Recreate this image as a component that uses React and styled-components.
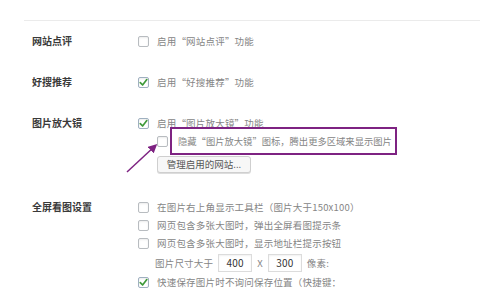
import React from "react";
import styled, { createGlobalStyle } from "styled-components";

const Global = createGlobalStyle`
  html, body { margin: 0; padding: 0; background: #fff; }
  body {
    font-family: "Noto Sans CJK SC", "Noto Sans", sans-serif;
    width: 480px; height: 295px; overflow: hidden;
  }
`;

const Page = styled.div`
  padding-top: 20px;
  position: relative;
`;

const Rule = styled.div`
  margin-left: 24px;
  border-top: 1px solid #ebebeb;
`;

const Form = styled.div`
  padding-left: 32px;
  padding-top: 11px;
`;

const Row = styled.div`
  display: grid;
  grid-template-columns: 106px 1fr;
  padding: ${(p) => p.$pad || "0 0 23px"};
  position: relative;
`;

const Label = styled.div`
  font-size: 10px;
  font-weight: 700;
  color: #3a3a3a;
  line-height: 18px;
  height: 18px;
`;

const Controls = styled.div`
  display: flex;
  flex-direction: column;
`;

const Item = styled.label`
  display: flex;
  align-items: center;
  gap: ${(p) => p.$gap || 8}px;
  height: ${(p) => p.$h || 18}px;
  padding-left: ${(p) => p.$indent || 0}px;
  font-size: 9.5px;
  letter-spacing: 0.2px;
  color: #858585;
  white-space: nowrap;
`;

const Box = styled.span`
  width: 11px;
  height: 11px;
  flex: none;
  box-sizing: border-box;
  border: 1px solid ${(p) => (p.$checked ? "#9fb0c0" : "#b8bcc0")};
  border-radius: 2px;
  background: #fff;
  box-shadow: inset 0 1px 2px rgba(0, 0, 0, 0.08);
  display: flex;
  align-items: center;
  justify-content: center;
`;

const Highlight = styled.span`
  position: relative;
  letter-spacing: 0;
  font-size: 9.3px;
  &::after {
    content: "";
    position: absolute;
    top: -7px;
    bottom: -7px;
    left: -8px;
    right: -5px;
    border: 2px solid #7e2382;
  }
`;

const Button = styled.button`
  margin: 6px 0 0 19px;
  align-self: flex-start;
  width: 94px;
  height: 17px;
  padding: 0;
  font-family: inherit;
  font-size: 9.5px;
  color: #555;
  background: #f7f7f7;
  border: 1px solid #cfcfcf;
  border-radius: 3px;
  box-shadow: 0 1px 0 #ddd;
  line-height: 15px;
`;

const Num = styled.span`
  width: 34px;
  height: 18px;
  box-sizing: border-box;
  border: 1px solid #dcdcdc;
  box-shadow: inset 0 1px 2px rgba(0, 0, 0, 0.06);
  display: inline-flex;
  align-items: center;
  justify-content: center;
  font-size: 10px;
  color: #333;
`;

const SizeRow = styled.div`
  display: flex;
  align-items: center;
  height: 21px;
  padding-left: 17px;
  font-size: 9.5px;
  letter-spacing: 0.2px;
  color: #858585;
  white-space: nowrap;
  gap: 5px;
`;

const Arrow = styled.svg`
  position: absolute;
  left: 0;
  top: 0;
  overflow: visible;
  pointer-events: none;
`;

const Check = () => (
  <svg width="9" height="9" viewBox="0 0 9 9">
    <path d="M1.3 4.6 L3.6 7 L7.8 1.6" fill="none" stroke="#3f9a3a" strokeWidth="1.7" strokeLinecap="round" strokeLinejoin="round" />
  </svg>
);

const CheckItem = ({ checked, children, indent }) => (
  <Item $indent={indent}>
    <Box $checked={checked}>{checked && <Check />}</Box>
    <span>{children}</span>
  </Item>
);

export default function App() {
  return (
    <Page>
      <Global />
      <Rule />
      <Form>
        <Row>
          <Label>网站点评</Label>
          <Controls>
            <CheckItem>启用“网站点评”功能</CheckItem>
          </Controls>
        </Row>
        <Row>
          <Label>好搜推荐</Label>
          <Controls>
            <CheckItem checked>启用“好搜推荐”功能</CheckItem>
          </Controls>
        </Row>
        <Row $pad="0 0 25px">
          <Label>图片放大镜</Label>
          <Controls>
            <CheckItem checked>启用“图片放大镜”功能</CheckItem>
            <Item $indent={19} $gap={10}>
              <Box />
              <Highlight>隐藏“图片放大镜”图标，腾出更多区域来显示图片</Highlight>
            </Item>
            <Button>管理启用的网站...</Button>
          </Controls>
        </Row>
        <Row $pad="0">
          <Label>全屏看图设置</Label>
          <Controls>
            <CheckItem>在图片右上角显示工具栏（图片大于150x100）</CheckItem>
            <CheckItem>网页包含多张大图时，弹出全屏看图提示条</CheckItem>
            <CheckItem>网页包含多张大图时，显示地址栏提示按钮</CheckItem>
            <SizeRow>
              图片尺寸大于<Num>400</Num>X<Num>300</Num>像素:
            </SizeRow>
            <CheckItem checked>快速保存图片时不询问保存位置（快捷键：</CheckItem>
          </Controls>
        </Row>
      </Form>
      <Arrow width="480" height="295">
        <defs>
          <marker id="ah" markerWidth="6" markerHeight="6" refX="4" refY="3" orient="auto" markerUnits="strokeWidth">
            <path d="M0 0 L6 3 L0 6 Z" fill="#7e2382" />
          </marker>
        </defs>
        <line x1="127" y1="172" x2="155" y2="146" stroke="#7e2382" strokeWidth="1.5" markerEnd="url(#ah)" />
      </Arrow>
    </Page>
  );
}
